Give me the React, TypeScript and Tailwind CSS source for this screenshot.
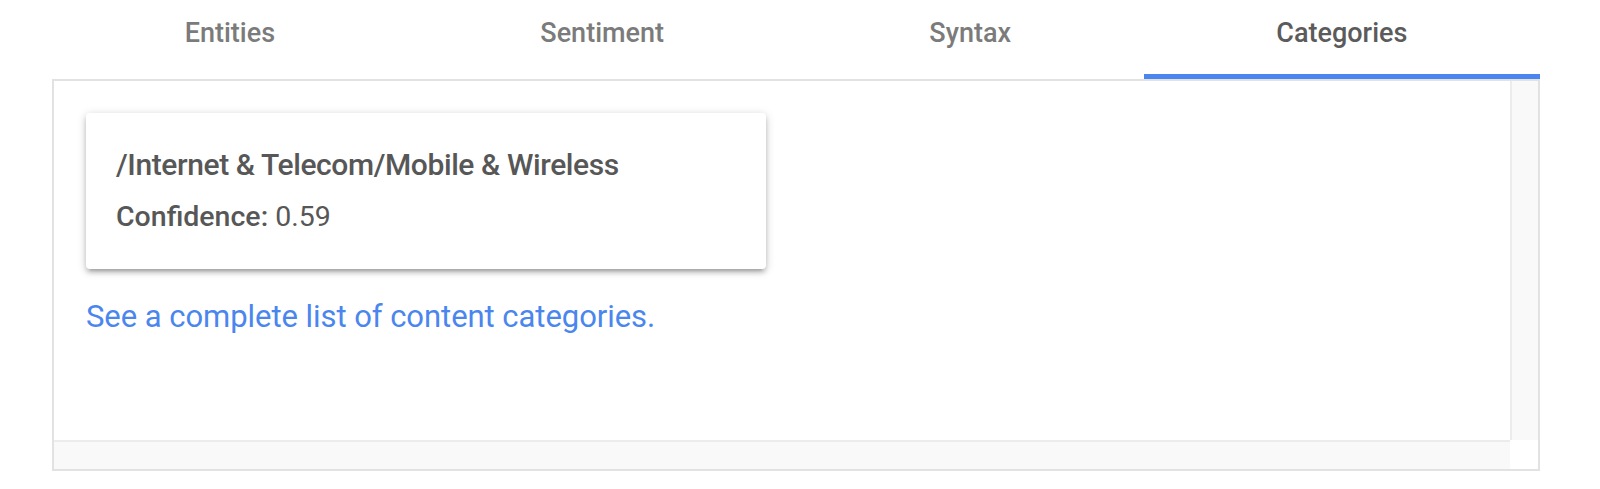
import { useState } from "react";

const tabs = ["Entities", "Sentiment", "Syntax", "Categories"];

export default function App() {
  const [active, setActive] = useState("Categories");

  return (
    <div className="min-h-[489px] w-[1600px] bg-white font-['Roboto',sans-serif]">
      <div className="ml-[52px] w-[1488px]">
        <div className="flex h-[79px]">
          {tabs.map((tab) => (
            <button
              key={tab}
              onClick={() => setActive(tab)}
              className="flex flex-auto flex-col items-center"
            >
              <span
                className={`mt-[13px] text-[27px] leading-[40px] font-medium ${
                  tab === active ? "text-[#5b5b5b]" : "text-[#7b7b7b]"
                }`}
              >
                {tab}
              </span>
              <span className={`mt-auto h-[5px] w-full ${tab === active ? "bg-[#4a86ee]" : ""}`} />
            </button>
          ))}
        </div>
        <Panel />
      </div>
    </div>
  );
}

function Panel() {
  return (
    <div className="grid h-[392px] grid-cols-[1fr_28px] grid-rows-[1fr_29px] border-2 border-[#e2e2e2]">
      <div className="px-8 pt-8">
        <div className="w-[680px] rounded-[4px] bg-white px-[30px] py-8 shadow-[0_4px_4px_rgba(0,0,0,0.14),0_6px_2px_-4px_rgba(0,0,0,0.12),0_2px_10px_rgba(0,0,0,0.2)]">
          <div className="text-[30px] leading-[40px] font-medium tracking-[-0.4px] text-[#575757]">
            /Internet &amp; Telecom/Mobile &amp; Wireless
          </div>
          <div className="mt-3 text-[28.5px] leading-[40px] text-[#575757]">
            <span className="font-medium">Confidence:</span> 0.59
          </div>
        </div>
        <a href="#" className="mt-7 block text-[31px] leading-[40px] tracking-[-0.05px] text-[#4a86ee]">
          See a complete list of content categories.
        </a>
      </div>
      <div className="border-l-2 border-[#ececec] bg-[#f9f9f9]" />
      <div className="border-t-2 border-[#ececec] bg-[#f9f9f9]" />
      <div className="bg-white" />
    </div>
  );
}
